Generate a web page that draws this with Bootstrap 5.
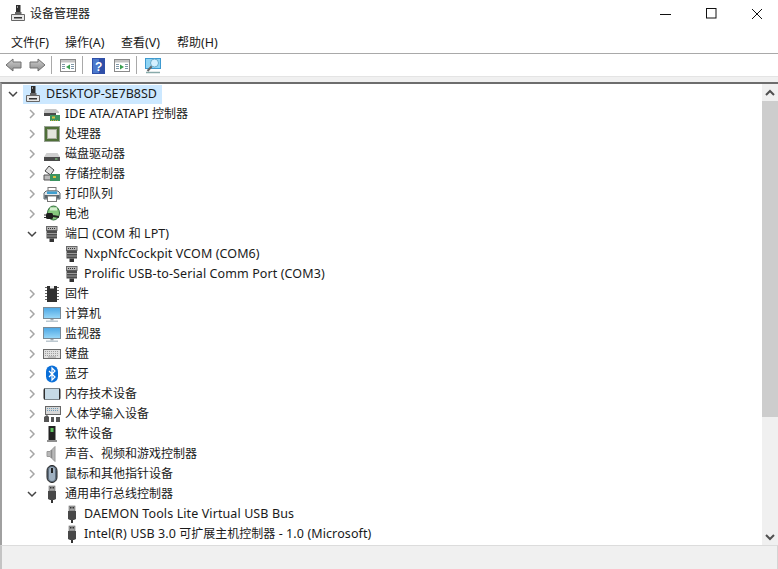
<!DOCTYPE html>
<html lang="zh"><head><meta charset="utf-8"><title>设备管理器</title>
<link href="https://cdn.jsdelivr.net/npm/bootstrap@5.3.0/dist/css/bootstrap.min.css" rel="stylesheet">
<style>
html,body{height:569px;overflow:hidden;background:#fff}
body{font-family:"Noto Sans","Noto Sans CJK SC",sans-serif;font-size:12px;color:#1a1a1a;line-height:20px}
.lat{font-size:12.5px}
.tree .lat{letter-spacing:.1px}
.tree .sel .lat{letter-spacing:0}
.win{height:569px;width:778px}
.titlebar{height:33px;padding-left:7px}
.titlebar .ttl{margin:4px 0 0 3px;font-size:12px}
.wctl{margin-right:-2px}
.wbtn{width:46px;height:27px}
.menubar{height:20px;padding-left:11px}
.mi{width:56px}
.mi:first-child{width:54px}
.toolbar{height:23px;border-top:1px solid #a9a9a9;padding-left:5px}
.tfwd{margin-left:5px}
.sep{width:1px;height:18px;background:#a9a9a9;margin:0 7px 0 5px}
.thelp{margin:0 8px 0 2px}
.tgap{height:6px;background:#f0f0f0;border-top:1px solid #e4e4e4}
.pane{height:463px;border-top:2px solid #6d6d6d;border-left:2px solid #a0a0a0;overflow:hidden}
.tree{width:760px;padding:0}
.rw{height:20px;white-space:nowrap}
.arr{width:12px;height:12px;flex:none}
.ico{width:18px;height:18px;flex:none}
.lv0{padding-left:5px}
.lv1{padding-left:24px}.lv1 .ico{margin:0 4px 0 5px}
.lv2{padding-left:61px}.lv2 .ico{margin:0 3px 0 0}
.sel{background:#cce8ff;width:139px;margin-left:4px;height:19px}
.sel .ico{margin:0 4px 0 1px}
.sbar{width:16px;background:#f0f0f0}
.sbtn{height:17px}
.thumb{height:316px;background:#cdcdcd}
.status{height:24px;border-top:1px solid #dcdcdc;border-left:2px solid #c4c4c4;border-right:1px solid #d4d4d4;background:#f0f0f0}
.grow1{flex:1}
</style></head><body>
<svg width="0" height="0" class="position-absolute">
<defs>
<linearGradient id="ga" x1="0" y1="0" x2="0" y2="1"><stop offset="0" stop-color="#d0d0d0"/><stop offset="1" stop-color="#8c8c8c"/></linearGradient>
<linearGradient id="gm" x1="0" y1="0" x2="0" y2="1"><stop offset="0" stop-color="#4aa6e4"/><stop offset="1" stop-color="#9ad8f8"/></linearGradient>
<symbol id="pc" viewBox="0 0 18 18"><rect x="7" y="1" width="4.500" height="7" fill="#2e2e2e"/><rect x="8" y="2" width="1" height="2" fill="#999"/><rect x="6" y="8" width="6.500" height="2" fill="#666"/><path d="M2.500 10.500h13v6h-13z" fill="#e8e8e8" stroke="#666"/><rect x="5" y="13" width="8" height="1.500" fill="#333"/></symbol>
<symbol id="ide" viewBox="0 0 18 18"><path d="M2 4h11l3 3v1H1V6z" fill="#c4c4c4"/><rect x="1" y="8" width="12" height="3" fill="#4a4a4a"/><rect x="7" y="10" width="10" height="6" fill="#3c9360"/><rect x="9" y="11.500" width="3" height="2" fill="#d8c040"/><path d="M8 15.500h8" stroke="#c8b040" stroke-dasharray="1 1"/></symbol>
<symbol id="cpu" viewBox="0 0 18 18"><rect x="2" y="2" width="14" height="14" fill="#4f6f38"/><rect x="1.500" y="1.500" width="15" height="15" fill="none" stroke="#33482a" stroke-dasharray="1 1"/><rect x="4.500" y="4.500" width="9" height="9" fill="#e4e6dc" stroke="#a8ac9c"/></symbol>
<symbol id="disk" viewBox="0 0 18 18"><path d="M3.500 8h11l2.500 4v1H1v-1z" fill="#cfcfcf"/><rect x="1" y="12" width="16" height="4" fill="#4a4a4a"/><rect x="12" y="13.500" width="2.500" height="1" fill="#86d886"/></symbol>
<symbol id="stor" viewBox="0 0 18 18"><path d="M6 1l5 4-3.500 5L2 6z" fill="#e0e0e0" stroke="#444"/><path d="M1 10h7v5H1z" fill="#bbb" stroke="#555"/><rect x="7" y="9" width="10" height="7" fill="#3c9360"/><rect x="10" y="11" width="3" height="2" fill="#d8c040"/></symbol>
<symbol id="prn" viewBox="0 0 18 18"><rect x="5" y="2.500" width="8" height="3.500" fill="#fff" stroke="#777"/><path d="M3 6h12l2 2v6H1V8z" fill="#dfe4e8" stroke="#5c6870"/><rect x="4" y="6.500" width="10" height="2.500" fill="#3f9fd0"/><rect x="1.500" y="10" width="15" height="3.500" fill="#58646c"/><rect x="4.500" y="11" width="9" height="5.500" fill="#fff" stroke="#777"/></symbol>
<symbol id="bat" viewBox="0 0 18 18"><ellipse cx="10.500" cy="8" rx="6" ry="7" fill="#86c87e" stroke="#2f6a3a"/><rect x="7" y="2.500" width="7" height="3" fill="#d4efcf"/><rect x="3" y="8" width="7" height="6" rx="1.500" fill="#1e1e1e"/><path d="M1 10h2M1 12.500h2" stroke="#333"/><path d="M10 11l6 1" stroke="#222" stroke-width="2"/></symbol>
<symbol id="port" viewBox="0 0 18 18"><rect x="3.500" y="1.500" width="10.500" height="4" fill="#b4b4b4" stroke="#6a6a6a"/><path d="M5 3.500h8" stroke="#333" stroke-dasharray="1 1"/><rect x="3.500" y="5.500" width="10.500" height="8" fill="#4c4c4c"/><path d="M3.500 8.500h10.500M3.500 11h10.500" stroke="#9a9a9a"/><rect x="6.500" y="13.500" width="4.500" height="3.500" fill="#333"/></symbol>
<symbol id="fw" viewBox="0 0 18 18"><rect x="4" y="1" width="10" height="16" fill="#303030"/><path d="M7 1h4v2.500H7z" fill="#f0f0f0"/><path d="M2 2.500h2M2 5.500h2M2 8.500h2M2 11.500h2M2 14.500h2M14 2.500h2M14 5.500h2M14 8.500h2M14 11.500h2M14 14.500h2" stroke="#666"/></symbol>
<symbol id="mon" viewBox="0 0 18 18"><rect x=".5" y="2.500" width="17" height="11" fill="url(#gm)" stroke="#7a8a96"/><rect x="7.500" y="14" width="3" height="1.500" fill="#9aa8b0"/><rect x="3" y="15.500" width="12" height="1.500" fill="#bcc8d0"/></symbol>
<symbol id="kbd" viewBox="0 0 18 18"><rect x=".5" y="4.500" width="17" height="9" fill="#e0e0e0" stroke="#6a6a6a"/><path d="M2 6.500h14M2 8.500h14M2 10.500h14" stroke="#a0a0a0" stroke-dasharray="1 1"/><rect x="5" y="11.500" width="8" height="1" fill="#999"/></symbol>
<symbol id="bt" viewBox="0 0 18 18"><rect x="3" y=".5" width="12" height="17" rx="6" fill="#0a6fd8"/><path d="M6 6l6 6-3 3V3l3 3-6 6" fill="none" stroke="#fff" stroke-width="1.200"/></symbol>
<symbol id="mem" viewBox="0 0 18 18"><rect x=".5" y="3" width="17" height="12" rx="2" fill="#2e2e2e"/><rect x="2" y="3.500" width="14" height="11" fill="#c6dae6"/></symbol>
<symbol id="hid" viewBox="0 0 18 18"><rect x="2.500" y="1.500" width="15" height="8" fill="#d8d8d8" stroke="#666"/><path d="M4 3.500h12M4 5.500h12" stroke="#6f9cb8" stroke-dasharray="1 1"/><path d="M1 17v-5l3-2 2 2v5zM8 17v-5h3v5zM13 17v-5h4v5z" fill="#555"/></symbol>
<symbol id="sw" viewBox="0 0 18 18"><rect x="5.500" y="1" width="7" height="14" fill="#222"/><rect x="7.500" y="3" width="3" height="4" fill="#5fc05f"/><rect x="4" y="15" width="10" height="2" fill="#909090"/></symbol>
<symbol id="snd" viewBox="0 0 18 18"><path d="M4 6.500h3l5-5v15l-5-5H4z" fill="#b8b8b8" stroke="#9a9a9a"/><path d="M8.500 5v8" stroke="#8a8a8a" stroke-width="1.500"/></symbol>
<symbol id="mouse" viewBox="0 0 18 18"><rect x="4" y=".5" width="10" height="17" rx="5" fill="#5f6e7e" stroke="#222"/><rect x="6" y="2" width="6" height="14" rx="3" fill="#9fb0c0"/><rect x="8" y="3" width="2" height="5" fill="#222"/></symbol>
<symbol id="usb" viewBox="0 0 18 18"><rect x="6" y="1" width="6" height="5" fill="#a4a4a4" stroke="#666" stroke-width=".6"/><rect x="7" y="2" width="1.500" height="1.500" fill="#333"/><rect x="9.500" y="2" width="1.500" height="1.500" fill="#333"/><path d="M5 6h8v8l-2 1H7l-2-1z" fill="#484848"/><rect x="8" y="15" width="2" height="3" fill="#333"/></symbol>
<symbol id="rgt" viewBox="0 0 12 12"><path d="M4 2l4 4-4 4" fill="none" stroke="#a6a6a6" stroke-width="1.500"/></symbol>
<symbol id="dwn" viewBox="0 0 12 12"><path d="M2 4l4 4 4-4" fill="none" stroke="#444" stroke-width="1.500"/></symbol>
<symbol id="wn" viewBox="0 0 18 16"><rect x="1.500" y="2.500" width="15" height="12" fill="#fff" stroke="#8a8a8a"/><rect x="2" y="3" width="14" height="2.500" fill="#c4c4c4"/><path d="M3 7.500h3M3 9.500h3M3 11.500h3M12 7.500h3M12 9.500h3M12 11.500h3" stroke="#7f97a8"/></symbol>
</defs></svg>
<div class="win d-flex flex-column">
 <div class="titlebar d-flex align-items-start">
  <svg class="ico mt-1" style="margin-left:2px"><use href="#pc"/></svg>
  <span class="ttl">设备管理器</span>
  <div class="wctl ms-auto d-flex">
   <div class="wbtn d-flex align-items-center justify-content-center"><svg width="11" height="11"><path d="M0 6.500h11" stroke="#111"/></svg></div>
   <div class="wbtn d-flex align-items-center justify-content-center"><svg width="11" height="11"><rect x=".5" y=".5" width="9.500" height="9.500" fill="none" stroke="#111"/></svg></div>
   <div class="wbtn d-flex align-items-center justify-content-center"><svg width="12" height="12"><path d="M1 1l10 10M11 1L1 11" stroke="#111"/></svg></div>
  </div>
 </div>
 <div class="menubar d-flex align-items-center"><span class="mi">文件<span class="lat">(F)</span></span><span class="mi">操作<span class="lat">(A)</span></span><span class="mi">查看<span class="lat">(V)</span></span><span class="mi">帮助<span class="lat">(H)</span></span></div>
 <div class="toolbar d-flex align-items-center">
  <svg width="18" height="16"><path d="M1 8l7-6v3h8v6H8v3z" fill="url(#ga)" stroke="#707070"/></svg>
  <svg width="18" height="16" class="tfwd"><path d="M17 8l-7-6v3H2v6h8v3z" fill="url(#ga)" stroke="#707070"/></svg>
  <span class="sep"></span>
  <svg width="18" height="16"><use href="#wn"/><path d="M11 7.500l-4 2.500 4 2.500z" fill="#3aa050"/></svg>
  <span class="sep"></span>
  <svg width="13" height="17" class="thelp"><rect width="13" height="16" y="1" fill="#2f4fa8"/><rect x="1" y="2" width="6" height="14" fill="#4a78cc"/><text x="3" y="14" font-size="12" font-weight="700" fill="#fff" font-family="Liberation Sans">?</text></svg>
  <svg width="18" height="16"><use href="#wn"/><path d="M7 7.500l4 2.500-4 2.500z" fill="#3aa050"/></svg>
  <span class="sep"></span>
  <svg width="18" height="17"><rect x="1.500" y="1.500" width="15" height="10" fill="#8fd4f4" stroke="#3e9ad0"/><path d="M2 15.500h14" stroke="#8aa" stroke-width="1.500"/><path d="M8 9l-4.500 5" stroke="#666" stroke-width="2"/><circle cx="10.500" cy="6" r="4" fill="#d4f0ff" stroke="#6aaccc"/></svg>
 </div>
 <div class="tgap"></div>
 <div class="pane d-flex">
  <div class="tree grow1">
   <ul class="list-unstyled m-0">
    <li class="rw lv0 d-flex align-items-center"><svg class="arr"><use href="#dwn"/></svg><div class="sel d-flex align-items-center"><svg class="ico"><use href="#pc"/></svg><span class="lat">DESKTOP-SE7B8SD</span></div></li>
    <li class="rw lv1 d-flex align-items-center"><svg class="arr"><use href="#rgt"/></svg><svg class="ico"><use href="#ide"/></svg><span><span class="lat">IDE ATA/ATAPI </span>控制器</span></li>
    <li class="rw lv1 d-flex align-items-center"><svg class="arr"><use href="#rgt"/></svg><svg class="ico"><use href="#cpu"/></svg><span>处理器</span></li>
    <li class="rw lv1 d-flex align-items-center"><svg class="arr"><use href="#rgt"/></svg><svg class="ico"><use href="#disk"/></svg><span>磁盘驱动器</span></li>
    <li class="rw lv1 d-flex align-items-center"><svg class="arr"><use href="#rgt"/></svg><svg class="ico"><use href="#stor"/></svg><span>存储控制器</span></li>
    <li class="rw lv1 d-flex align-items-center"><svg class="arr"><use href="#rgt"/></svg><svg class="ico"><use href="#prn"/></svg><span>打印队列</span></li>
    <li class="rw lv1 d-flex align-items-center"><svg class="arr"><use href="#rgt"/></svg><svg class="ico"><use href="#bat"/></svg><span>电池</span></li>
    <li class="rw lv1 d-flex align-items-center"><svg class="arr"><use href="#dwn"/></svg><svg class="ico"><use href="#port"/></svg><span>端口<span class="lat"> (COM </span>和<span class="lat"> LPT)</span></span></li>
    <li class="rw lv2 d-flex align-items-center"><svg class="ico"><use href="#port"/></svg><span class="lat">NxpNfcCockpit VCOM (COM6)</span></li>
    <li class="rw lv2 d-flex align-items-center"><svg class="ico"><use href="#port"/></svg><span class="lat">Prolific USB-to-Serial Comm Port (COM3)</span></li>
    <li class="rw lv1 d-flex align-items-center"><svg class="arr"><use href="#rgt"/></svg><svg class="ico"><use href="#fw"/></svg><span>固件</span></li>
    <li class="rw lv1 d-flex align-items-center"><svg class="arr"><use href="#rgt"/></svg><svg class="ico"><use href="#mon"/></svg><span>计算机</span></li>
    <li class="rw lv1 d-flex align-items-center"><svg class="arr"><use href="#rgt"/></svg><svg class="ico"><use href="#mon"/></svg><span>监视器</span></li>
    <li class="rw lv1 d-flex align-items-center"><svg class="arr"><use href="#rgt"/></svg><svg class="ico"><use href="#kbd"/></svg><span>键盘</span></li>
    <li class="rw lv1 d-flex align-items-center"><svg class="arr"><use href="#rgt"/></svg><svg class="ico"><use href="#bt"/></svg><span>蓝牙</span></li>
    <li class="rw lv1 d-flex align-items-center"><svg class="arr"><use href="#rgt"/></svg><svg class="ico"><use href="#mem"/></svg><span>内存技术设备</span></li>
    <li class="rw lv1 d-flex align-items-center"><svg class="arr"><use href="#rgt"/></svg><svg class="ico"><use href="#hid"/></svg><span>人体学输入设备</span></li>
    <li class="rw lv1 d-flex align-items-center"><svg class="arr"><use href="#rgt"/></svg><svg class="ico"><use href="#sw"/></svg><span>软件设备</span></li>
    <li class="rw lv1 d-flex align-items-center"><svg class="arr"><use href="#rgt"/></svg><svg class="ico"><use href="#snd"/></svg><span>声音、视频和游戏控制器</span></li>
    <li class="rw lv1 d-flex align-items-center"><svg class="arr"><use href="#rgt"/></svg><svg class="ico"><use href="#mouse"/></svg><span>鼠标和其他指针设备</span></li>
    <li class="rw lv1 d-flex align-items-center"><svg class="arr"><use href="#dwn"/></svg><svg class="ico"><use href="#usb"/></svg><span>通用串行总线控制器</span></li>
    <li class="rw lv2 d-flex align-items-center"><svg class="ico"><use href="#usb"/></svg><span class="lat">DAEMON Tools Lite Virtual USB Bus</span></li>
    <li class="rw lv2 d-flex align-items-center"><svg class="ico"><use href="#usb"/></svg><span><span class="lat">Intel(R) USB 3.0 </span>可扩展主机控制器<span class="lat"> - 1.0 (Microsoft)</span></span></li>
   </ul>
  </div>
  <div class="sbar d-flex flex-column">
   <div class="sbtn d-flex align-items-center justify-content-center"><svg width="10" height="8"><path d="M1 6l4-4 4 4" fill="none" stroke="#505050" stroke-width="2"/></svg></div>
   <div class="thumb"></div>
   <div class="mt-auto sbtn d-flex align-items-center justify-content-center"><svg width="10" height="8"><path d="M1 2l4 4 4-4" fill="none" stroke="#505050" stroke-width="2"/></svg></div>
  </div>
 </div>
 <div class="status"></div>
</div>
<script src="https://cdn.jsdelivr.net/npm/bootstrap@5.3.0/dist/js/bootstrap.bundle.min.js"></script>
</body></html>
